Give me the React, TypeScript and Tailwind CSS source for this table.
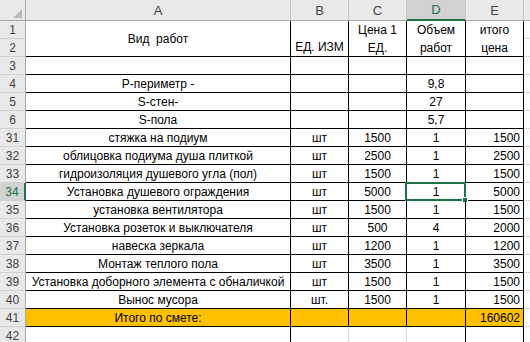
import React from "react";

type Row = {
  n: string;
  a?: string;
  b?: string;
  c?: string;
  d?: string;
  e?: string;
  total?: boolean;
  empty?: boolean;
};

const rows: Row[] = [
  { n: "3" },
  { n: "4", a: "P-периметр -", d: "9,8" },
  { n: "5", a: "S-стен-", d: "27" },
  { n: "6", a: "S-пола", d: "5,7" },
  { n: "31", a: "стяжка на подиум", b: "шт", c: "1500", d: "1", e: "1500" },
  { n: "32", a: "облицовка подиума душа плиткой", b: "шт", c: "2500", d: "1", e: "2500" },
  { n: "33", a: "гидроизоляция душевого угла (пол)", b: "шт", c: "1500", d: "1", e: "1500" },
  { n: "34", a: "Установка душевого ограждения", b: "шт", c: "5000", d: "1", e: "5000" },
  { n: "35", a: "установка вентилятора", b: "шт", c: "1500", d: "1", e: "1500" },
  { n: "36", a: "Установка розеток и выключателя", b: "шт", c: "500", d: "4", e: "2000" },
  { n: "37", a: "навеска зеркала", b: "шт", c: "1200", d: "1", e: "1200" },
  { n: "38", a: "Монтаж теплого пола", b: "шт", c: "3500", d: "1", e: "3500" },
  { n: "39", a: "Установка доборного элемента с обналичкой", b: "шт", c: "1500", d: "1", e: "1500" },
  { n: "40", a: "Вынос мусора", b: "шт.", c: "1500", d: "1", e: "1500" },
  { n: "41", a: "Итого по смете:", e: "160602", total: true },
  { n: "42", empty: true },
];

const cols = [
  { key: "A", w: "w-[265px]" },
  { key: "B", w: "w-[58px]" },
  { key: "C", w: "w-[58px]" },
  { key: "D", w: "w-[59px]" },
  { key: "E", w: "w-[58px]" },
];

function RowHeader({ n, selected, h = "h-[18px]" }: { n: string; selected?: boolean; h?: string }) {
  return (
    <div
      className={`${h} w-[26px] shrink-0 flex items-center justify-center border-b border-b-[#d0d0d0] ${
        selected
          ? "bg-[#d2d2d2] text-[#217346] border-r-2 border-r-[#217346]"
          : "bg-[#e9e9e9] text-[#444] border-r border-r-[#a8a8a8]"
      }`}
    >
      {n}
    </div>
  );
}

export default function App() {
  return (
    <div
      className="w-[530px] h-[342px] overflow-hidden bg-white text-[12px] text-black leading-none"
      style={{ fontFamily: '"Liberation Sans", Arial, sans-serif' }}
    >
      {/* Column headers */}
      <div className="flex h-[21px] bg-[#e9e9e9] text-[13px] text-[#444]">
        <div className="w-[26px] shrink-0 relative border-r border-b border-[#a8a8a8]">
          <svg className="absolute left-[13px] top-[9px]" width="9" height="9" viewBox="0 0 9 9">
            <polygon points="9,0 9,9 0,9" fill="#b9b9b9" />
          </svg>
        </div>
        {cols.map((c) => (
          <div
            key={c.key}
            className={`${c.w} shrink-0 flex items-center justify-center border-r border-r-[#c6c6c6] ${
              c.key === "D"
                ? "bg-[#d2d2d2] text-[#217346] border-b-2 border-b-[#217346]"
                : "border-b border-b-[#a8a8a8]"
            }`}
          >
            {c.key}
          </div>
        ))}
        <div className="flex-1 border-b border-[#a8a8a8]" />
      </div>

      {/* Rows 1-2 (merged heading) */}
      <div className="flex h-[36px]">
        <div className="flex flex-col">
          <RowHeader n="1" />
          <RowHeader n="2" />
        </div>
        <div className="w-[265px] shrink-0 flex items-center justify-center border-r border-b border-black">
          Вид&nbsp;&nbsp;работ
        </div>
        <div className="w-[58px] shrink-0 flex items-end justify-center pb-[3px] border-r border-b border-black">
          ЕД. ИЗМ
        </div>
        <div className="w-[58px] shrink-0 flex flex-col border-r border-b border-black">
          <div className="h-[18px] flex items-center justify-center">Цена 1</div>
          <div className="h-[17px] flex items-center justify-center">ЕД.</div>
        </div>
        <div className="w-[59px] shrink-0 flex flex-col border-r border-b border-black">
          <div className="h-[18px] flex items-center justify-center">Объем</div>
          <div className="h-[17px] flex items-center justify-center">работ</div>
        </div>
        <div className="w-[58px] shrink-0 flex flex-col border-r border-b border-black">
          <div className="h-[18px] flex items-center justify-center">итого</div>
          <div className="h-[17px] flex items-center justify-center">цена</div>
        </div>
        <div className="flex-1 flex flex-col">
          <div className="h-[18px] border-b border-[#d9d9d9]" />
          <div className="h-[18px] border-b border-[#d9d9d9]" />
        </div>
      </div>

      {/* Data rows */}
      {rows.map((r) => {
        const sel = r.n === "34";
        const bg = r.total ? "bg-[#ffc000]" : "";
        const line = r.empty ? "border-b-[#d9d9d9]" : "border-b-black";
        return (
          <div key={r.n} className="flex h-[18px]">
            <RowHeader n={r.n} selected={sel} />
            <div
              className={`w-[265px] shrink-0 flex items-center justify-center whitespace-nowrap border-b ${line} border-r ${
                r.empty ? "border-r-black" : "border-r-black"
              } ${bg}`}
            >
              {r.a}
            </div>
            <div
              className={`w-[58px] shrink-0 flex items-center justify-center border-b ${line} border-r ${
                r.empty ? "border-r-[#d9d9d9]" : "border-r-black"
              } ${bg}`}
            >
              {r.b}
            </div>
            <div
              className={`w-[58px] shrink-0 flex items-center justify-center border-b ${line} border-r ${
                r.empty ? "border-r-[#d9d9d9]" : "border-r-black"
              } ${bg}`}
            >
              {r.c}
            </div>
            <div
              className={`relative w-[59px] shrink-0 flex items-center justify-center border-b ${line} border-r border-r-black ${bg}`}
            >
              {r.d}
              {sel && (
                <>
                  <div className="absolute -left-[2px] -top-[1px] -right-[1px] -bottom-[1px] border-2 border-[#217346]" />
                  <div className="absolute -right-[3px] -bottom-[3px] w-[6px] h-[6px] bg-[#217346] border border-white" />
                </>
              )}
            </div>
            <div
              className={`w-[58px] shrink-0 flex items-center justify-end pr-[3px] border-b ${line} border-r border-r-black ${bg}`}
            >
              {r.e}
            </div>
            <div className="flex-1 border-b border-[#d9d9d9]" />
          </div>
        );
      })}
    </div>
  );
}
